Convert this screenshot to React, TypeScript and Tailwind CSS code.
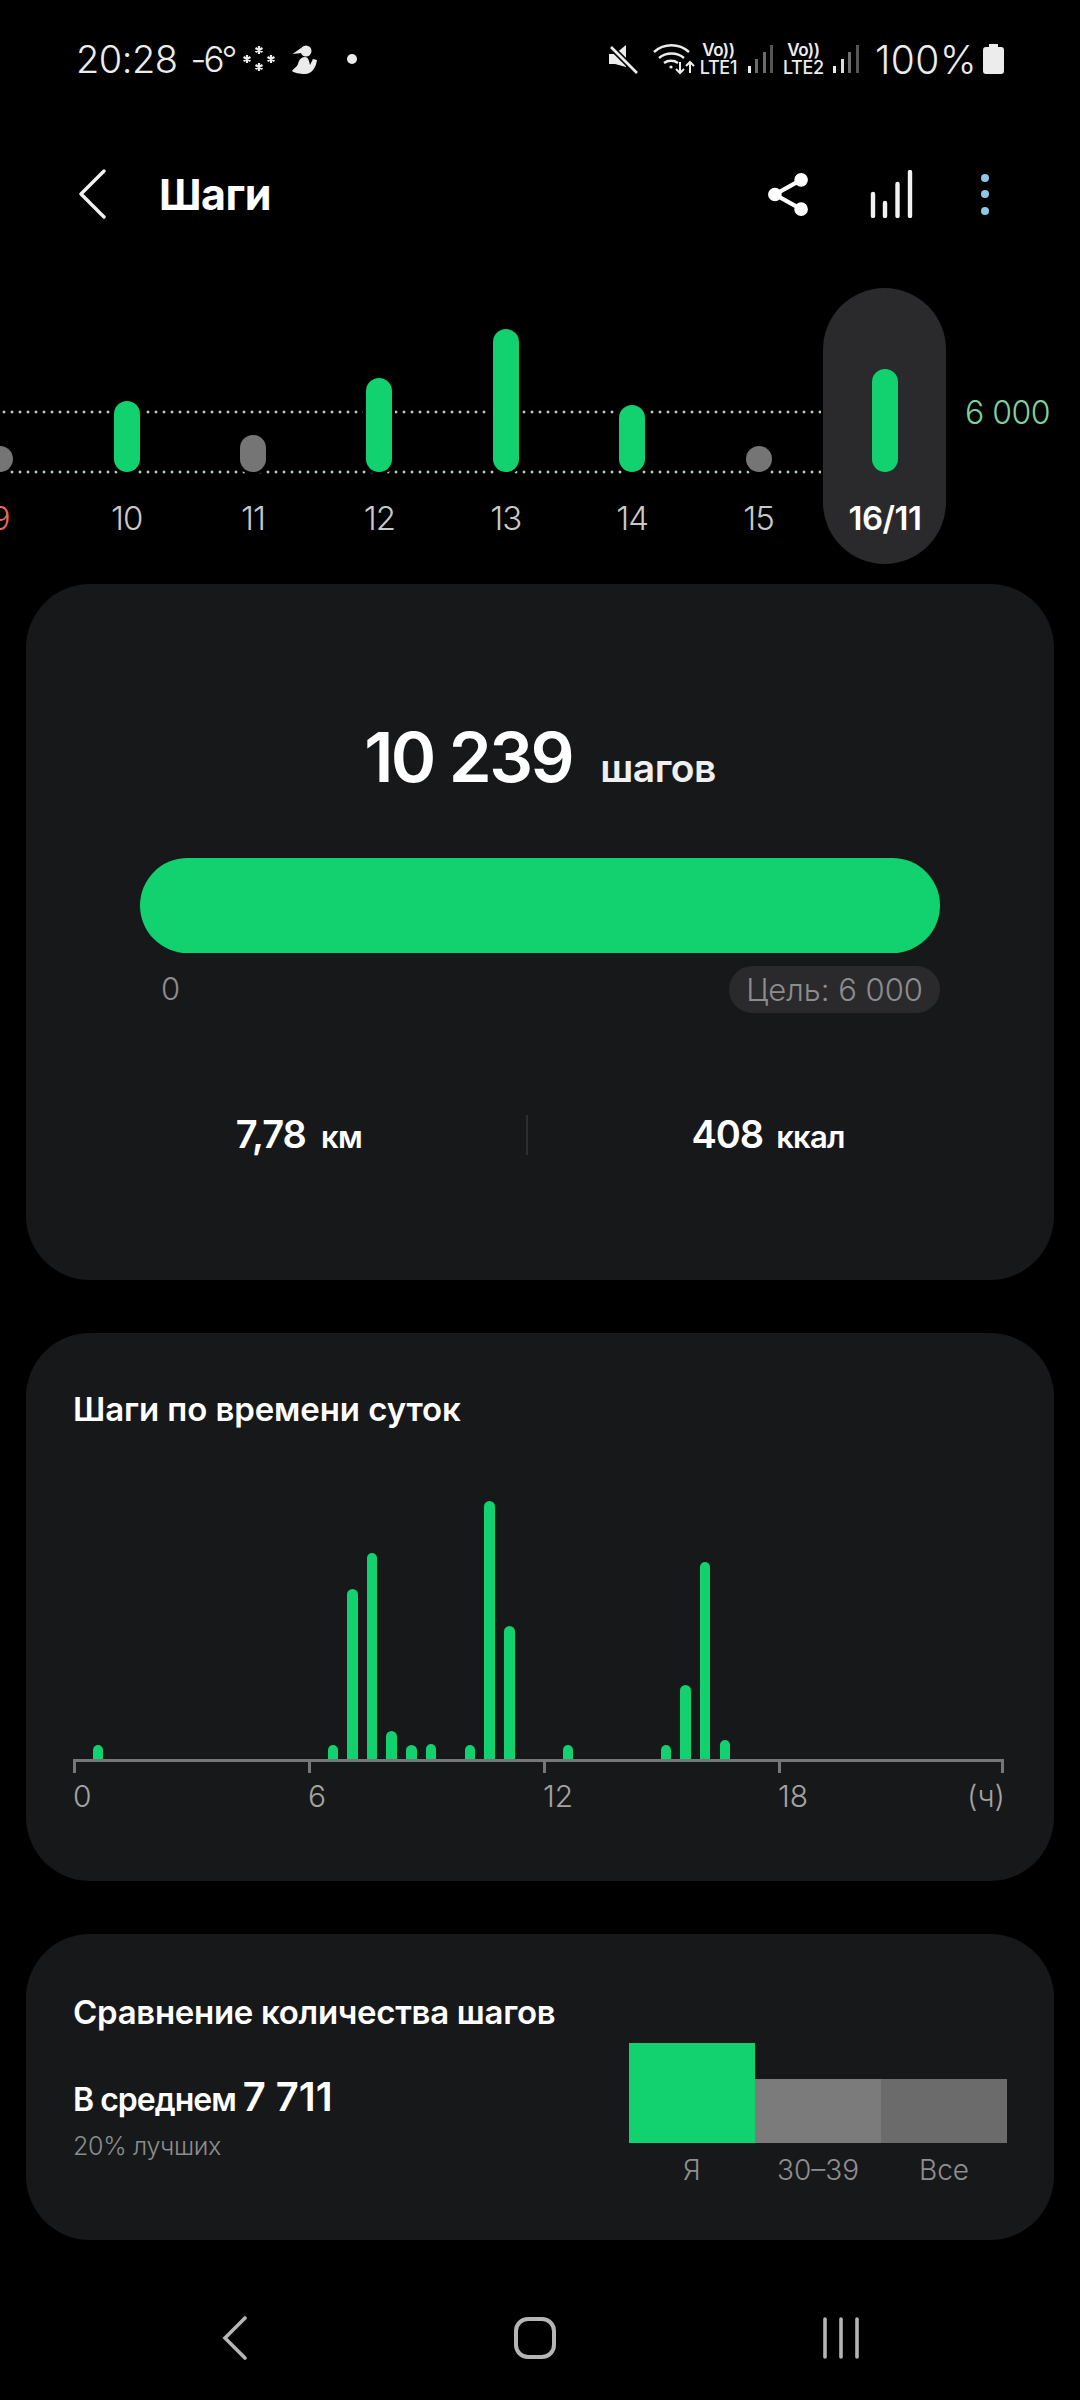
import React from "react";

const font = { fontFamily: "Inter, 'Noto Sans', sans-serif" };

const days = [
  { label: "9", top: 446, color: "bg-[#757575]", text: "text-[#e06a62]" },
  { label: "10", top: 401, color: "bg-[#12d16f]", text: "text-[#c9c9c9]" },
  { label: "11", top: 435, color: "bg-[#757575]", text: "text-[#c9c9c9]" },
  { label: "12", top: 378, color: "bg-[#12d16f]", text: "text-[#c9c9c9]" },
  { label: "13", top: 329, color: "bg-[#12d16f]", text: "text-[#c9c9c9]" },
  { label: "14", top: 405, color: "bg-[#12d16f]", text: "text-[#c9c9c9]" },
  { label: "15", top: 446, color: "bg-[#757575]", text: "text-[#c9c9c9]" },
];

const hours: Record<number, number> = {
  0: 14, 12: 14, 13: 170, 14: 206, 15: 28, 16: 14, 17: 15, 19: 14, 20: 258, 21: 133, 24: 14, 29: 14, 30: 74, 31: 197, 32: 19,
};
const slots = Array.from({ length: 33 }, (_, i) => i);

function Signal({ second }: { second?: boolean }) {
  return (
    <div className="ml-[10px] flex items-end gap-[4.5px] h-[28px]">
      <div className="w-[3px] h-[7px] bg-[#ececec]" />
      <div className={`w-[3px] h-[14px] ${second ? "bg-[#dcdcdc]" : "bg-[#6b6b6b]"}`} />
      <div className="w-[3px] h-[21px] bg-[#6b6b6b]" />
      <div className="w-[3px] h-[28px] bg-[#555]" />
    </div>
  );
}

function StatusBar() {
  return (
    <div className="h-[146px] pl-[76px] pr-[76px] pt-[40px] flex justify-between items-start text-[#ececec]">
      <div className="flex items-center h-[38px]">
        <span className="text-[38px] font-light tracking-[-0.5px] leading-none">20:28</span>
        <span className="text-[35px] font-light leading-none ml-[13px] tracking-[-3px]">-6°</span>
        <svg width="32" height="26" viewBox="0 0 32 26" className="ml-[9px]" fill="none" stroke="#ececec" strokeWidth="2.2">
          <path d="M16 0v8M12.5 2l7 4M19.5 2l-7 4M4 9v8M.5 11l7 4M7.5 11l-7 4M28 9v8M24.5 11l7 4M31.5 11l-7 4M16 17v8M12.5 19l7 4M19.5 19l-7 4" />
        </svg>
        <svg width="25" height="29" viewBox="0 0 25 29" className="ml-[17px]" fill="#ececec">
          <circle cx="14" cy="6" r="5.5" />
          <path d="M.5 9L9 3l1 5zM13 12c3 0 4 3 5 8l3-6 4 1c-1 7-5 14-12 14-5 0-11-1-13-3 2-3 5-4 6-7 1-4 3-7 7-7z" />
        </svg>
        <div className="w-[10px] h-[10px] rounded-full bg-[#ececec] ml-[30px]" />
      </div>
      <div className="flex items-center h-[38px]">
        <svg width="30" height="30" viewBox="0 0 30 30" fill="#ececec">
          <path d="M0 10h6l11-9v22L6 20H0z" />
          <path d="M2 3l26 26" stroke="#000" strokeWidth="6" />
          <path d="M2 3l26 26" stroke="#ececec" strokeWidth="2.6" />
        </svg>
        <svg width="42" height="32" viewBox="0 0 42 32" className="ml-[14px]" fill="none" stroke="#ececec" strokeWidth="2.4">
          <path d="M1 9c10-9 25-9 35 0M6 15c7-6 18-6 25 0M11 20c4-3 10-3 14 0" />
          <circle cx="18" cy="24" r="1.6" fill="#ececec" stroke="none" />
          <path d="M27 19v11M23 26l4 4 4-4M37 30V19M33 23l4-4 4 4" strokeWidth="2" />
        </svg>
        <div className="ml-[4px] flex flex-col items-center w-[39px] leading-none">
          <span className="text-[17px] font-semibold h-[17px] tracking-[-0.5px]">Vo))</span>
          <span className="text-[18px] font-medium tracking-[-0.3px]">LTE1</span>
        </div>
        <Signal />
        <div className="ml-[10px] flex flex-col items-center w-[40px] leading-none">
          <span className="text-[17px] font-semibold h-[17px] tracking-[-0.5px]">Vo))</span>
          <span className="text-[18px] font-medium tracking-[-0.3px]">LTE2</span>
        </div>
        <Signal second />
        <span className="text-[39px] font-light leading-none ml-[16px] tracking-[0.5px]">100%</span>
        <svg width="21" height="30" viewBox="0 0 21 30" className="ml-[6px]" fill="#ececec">
          <path d="M6 0h9v3h3a3 3 0 0 1 3 3v21a3 3 0 0 1-3 3H3a3 3 0 0 1-3-3V6a3 3 0 0 1 3-3h3z" />
        </svg>
      </div>
    </div>
  );
}

function Header() {
  return (
    <div className="h-[96px] pl-[78px] pr-[91px] flex items-center">
      <svg width="28" height="50" viewBox="0 0 28 50" fill="none" stroke="#f2f2f2" strokeWidth="3.4" strokeLinecap="round" strokeLinejoin="round">
        <path d="M26 2L3 25l23 23" />
      </svg>
      <h1 className="ml-[53px] text-[43px] font-bold text-white tracking-[-0.5px]">Шаги</h1>
      <div className="ml-auto flex items-center">
        <svg width="40" height="43" viewBox="0 0 38 41" fill="white" stroke="white" strokeWidth="4">
          <path d="M31.5 6.5L6.5 20.5l25 14" fill="none" />
          <circle cx="31.5" cy="6.5" r="4.5" />
          <circle cx="6.5" cy="20.5" r="4.5" />
          <circle cx="31.5" cy="34.5" r="4.5" />
        </svg>
        <svg width="44" height="48" viewBox="0 0 44 48" className="ml-[62px]" fill="none" stroke="#f2f2f2" strokeWidth="4.4" strokeLinecap="round">
          <path d="M3 24v22M15 33v13M27.5 14v32M40 2v44" />
        </svg>
        <div className="ml-[67px] flex flex-col gap-[8.5px]">
          <div className="w-[8px] h-[8px] rounded-full bg-[#8fc7e8]" />
          <div className="w-[8px] h-[8px] rounded-full bg-[#8fc7e8]" />
          <div className="w-[8px] h-[8px] rounded-full bg-[#8fc7e8]" />
        </div>
      </div>
    </div>
  );
}

function WeekChart() {
  return (
    <div className="relative h-[276px] mt-[46px]">
      <div className="absolute left-0 w-[821px] top-[122px] h-[4px] bg-[radial-gradient(circle,#b5cfc0_1.3px,transparent_1.7px)] bg-[length:8px_4px]" />
      <div className="absolute left-0 w-[821px] top-[182px] h-[4px] bg-[radial-gradient(circle,#b5cfc0_1.3px,transparent_1.7px)] bg-[length:8px_4px]" />
      <div className="absolute left-[-63px] top-0 flex h-[276px]">
        {days.map((d) => (
          <div key={d.label} className="w-[126.4px] h-full flex flex-col items-center">
            <div className="h-[184px] flex items-end">
              <div className={`w-[26px] rounded-full ring-[3px] ring-black ${d.color}`} style={{ height: 472 - d.top }} />
            </div>
            <span className={`mt-[24px] text-[33px] leading-[44px] tracking-[-1px] font-light ${d.text}`}>{d.label}</span>
          </div>
        ))}
        <div className="w-[126.4px] flex justify-center">
          <div className="w-[123px] h-full rounded-full bg-[#2a2a2c] flex flex-col items-center">
            <div className="h-[184px] flex items-end">
              <div className="w-[26px] h-[103px] rounded-full bg-[#12d16f]" />
            </div>
            <span className="mt-[24px] text-[33px] leading-[44px] font-semibold text-white tracking-[-0.5px]">16/11</span>
          </div>
        </div>
      </div>
      <span className="absolute left-[965px] top-[106px] text-[32px] leading-[38px] font-light tracking-[-0.5px] text-[#7fd19b]">6 000</span>
    </div>
  );
}

function GoalCard() {
  return (
    <div className="mt-[20px] mx-[26px] h-[696px] rounded-[64px] bg-[#17181a] px-[114px] pt-[131px]">
      <div className="flex items-baseline justify-center gap-[28px] text-white">
        <span className="text-[69px] leading-[84px] font-semibold tracking-[-2.5px]">10 239</span>
        <span className="text-[39px] font-semibold tracking-[-0.5px] text-[#efefef]">шагов</span>
      </div>
      <div className="mt-[59px] h-[95px] rounded-full bg-[#12d16f]" />
      <div className="mt-[13px] flex items-center justify-between">
        <span className="ml-[21px] text-[31px] text-[#8d8d8d] font-light">0</span>
        <span className="h-[47px] px-[17px] rounded-full bg-[#2a2a2c] text-[31px] leading-[47px] text-[#8d8d8d] font-light">Цель: 6 000</span>
      </div>
      <div className="mt-[93px] -mx-[68px] flex items-center">
        <div className="w-[454px] flex items-baseline justify-center gap-[15px] text-white font-semibold">
          <span className="text-[38px] tracking-[-1px]">7,78</span>
          <span className="text-[31px] tracking-[-0.5px]">км</span>
        </div>
        <div className="w-[2px] h-[40px] bg-[#2e2e30]" />
        <div className="flex-1 flex items-baseline justify-center gap-[13px] text-white font-semibold">
          <span className="text-[38px] tracking-[-1px]">408</span>
          <span className="text-[31px] tracking-[-0.8px]">ккал</span>
        </div>
      </div>
    </div>
  );
}

function HoursCard() {
  return (
    <div className="mt-[53px] mx-[26px] h-[548px] rounded-[64px] bg-[#17181a] pl-[47px] pt-[52px]">
      <h2 className="text-[33px] leading-[48px] font-semibold text-white tracking-[-0.1px]">Шаги по времени суток</h2>
      <div className="mt-[6px] h-[320px] pl-[15px] flex items-end">
        {slots.map((i) => (
          <div key={i} className="w-[19.6px] flex justify-center">
            {hours[i] ? <div className="w-[10.5px] rounded-t-full bg-[#12d16f]" style={{ height: hours[i] }} /> : null}
          </div>
        ))}
      </div>
      <div className="flex h-[14px] border-t-[3px] border-[#777] w-[931px]">
        <div className="w-[235px] border-l-[3px] border-[#777]" />
        <div className="w-[235px] border-l-[3px] border-[#777]" />
        <div className="w-[235px] border-l-[3px] border-[#777]" />
        <div className="flex-1 border-x-[3px] border-[#777]" />
      </div>
      <div className="flex w-[932px] text-[30px] leading-[46px] font-light text-[#a3a3a3]">
        <span className="w-[235px]">0</span>
        <span className="w-[235px]">6</span>
        <span className="w-[235px]">12</span>
        <span className="flex-1 flex justify-between"><span>18</span><span>(ч)</span></span>
      </div>
    </div>
  );
}

function CompareCard() {
  return (
    <div className="mt-[53px] mx-[26px] h-[306px] rounded-[64px] bg-[#17181a] pl-[47px] pr-[47px] pt-[54px]">
      <h2 className="text-[33px] leading-[48px] font-semibold text-white tracking-[-0.3px]">Сравнение количества шагов</h2>
      <div className="flex justify-between">
        <div className="pt-[31px]">
          <div className="flex items-baseline gap-[7px] text-white font-semibold">
            <span className="text-[32px] tracking-[-1px]">В среднем</span>
            <span className="text-[40px]">7 711</span>
          </div>
          <div className="mt-[1px] text-[25px] font-light tracking-[-0.3px] text-[#8d8d8d]">20% лучших</div>
        </div>
        <div className="mt-[7px] flex text-center text-[28px] leading-[54px] font-light text-[#8f8f8f]">
          <div className="w-[126px] flex flex-col justify-end">
            <div className="h-[100px] bg-[#12d16f]" />
            Я
          </div>
          <div className="w-[126px] flex flex-col justify-end">
            <div className="h-[64px] bg-[#7b7b7b]" />
            30–39
          </div>
          <div className="w-[126px] flex flex-col justify-end">
            <div className="h-[64px] bg-[#6b6b6b]" />
            Все
          </div>
        </div>
      </div>
    </div>
  );
}

function NavBar() {
  return (
    <div className="flex-1">
      <div className="flex items-center justify-between pl-[222px] pr-[220px] pt-[76px]">
        <svg width="26" height="44" viewBox="0 0 26 44" fill="none" stroke="#b5b5b5" strokeWidth="3.6" strokeLinecap="round">
          <path d="M23 2L3 22l20 20" />
        </svg>
        <div className="w-[42px] h-[42px] rounded-[14px] border-[4px] border-[#b5b5b5]" />
        <svg width="38" height="42" viewBox="0 0 38 42" fill="none" stroke="#b5b5b5" strokeWidth="3.6" strokeLinecap="round">
          <path d="M3 2v38M19 2v38M35 2v38" />
        </svg>
      </div>
    </div>
  );
}

export default function App() {
  return (
    <div className="w-[1080px] h-[2400px] bg-black flex flex-col overflow-hidden" style={font}>
      <StatusBar />
      <Header />
      <WeekChart />
      <GoalCard />
      <HoursCard />
      <CompareCard />
      <NavBar />
    </div>
  );
}
